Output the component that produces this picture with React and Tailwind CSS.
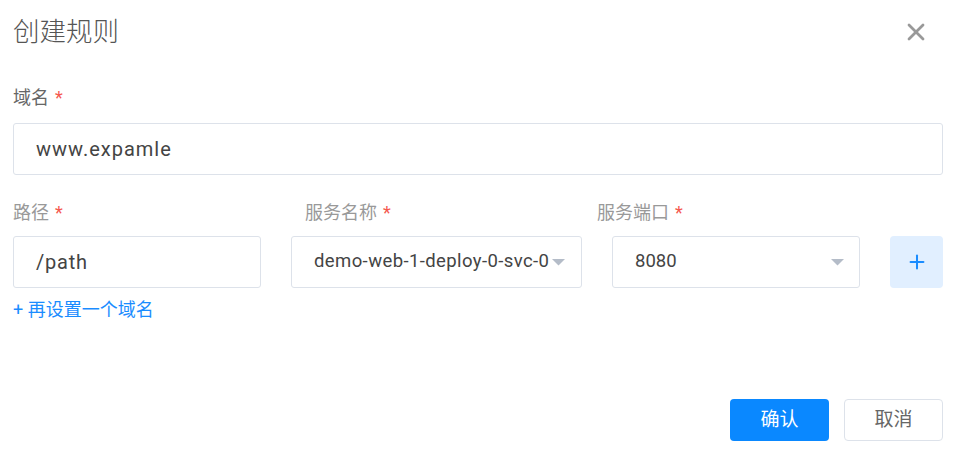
import { X, Plus } from 'lucide-react'

const FONT = 'font-[Roboto,"Noto_Sans_CJK_SC",sans-serif]'

function Label({ text, className = '' }) {
  return (
    <div className={`text-[18px] leading-[24px] ${className}`}>
      {text}
      <span className="ml-[6px] text-[#f5584f]">*</span>
    </div>
  )
}

function Caret() {
  return (
    <svg width="13" height="7" viewBox="0 0 13 7" className="shrink-0">
      <path d="M0 0 L13 0 L6.5 6.5 Z" fill="#b4bcc8" />
    </svg>
  )
}

function Select({ value, className = '', textClass = '' }) {
  return (
    <div className={`h-[52px] flex items-center pl-[22px] pr-[15px] border border-[#dde2ea] rounded-[3px] bg-white ${className}`}>
      <span className={`flex-1 min-w-0 overflow-hidden whitespace-nowrap text-[18.5px] text-[#444] ${textClass}`}>{value}</span>
      <Caret />
    </div>
  )
}

export default function App() {
  return (
    <div className={`w-[968px] h-[456px] bg-white pl-[13px] pr-[25px] ${FONT}`}>
      {/* Header */}
      <div className="mt-[14px] h-[36px] flex items-center justify-between">
        <h1 className="text-[26.5px] leading-[36px] text-[#555] font-light">创建规则</h1>
        <button className="mr-[13px] text-[#999]">
          <X size={28} strokeWidth={2.4} />
        </button>
      </div>

      {/* Domain */}
      <Label text="域名" className="mt-[36px] text-[#666]" />
      <div className="mt-[13px] h-[52px] flex items-center px-[22px] border border-[#dde2ea] rounded-[3px] text-[20px] text-[#444] tracking-[1px]">
        www.expamle
      </div>

      {/* Rule row */}
      <div className="mt-[26px] grid grid-cols-[292px_292px_292px] text-[#999]">
        <Label text="路径" />
        <Label text="服务名称" />
        <Label text="服务端口" />
      </div>
      <div className="mt-[11px] flex gap-[30px]">
        <div className="w-[248px] h-[52px] flex items-center px-[22px] border border-[#dde2ea] rounded-[3px] text-[20px] text-[#444] tracking-[0.8px]">
          /path
        </div>
        <Select value="demo-web-1-deploy-0-svc-0" className="w-[291px] pr-[16px]" textClass="tracking-[0.4px]" />
        <Select value="8080" className="w-[248px]" />
        <button className="w-[53px] h-[52px] flex items-center justify-center rounded-[4px] bg-[#e1efff] text-[#1a8cff]">
          <Plus size={22} strokeWidth={2.2} />
        </button>
      </div>

      <div className="mt-[10px] h-[24px] text-[18px] leading-[24px] text-[#1a8cff]">
        + 再设置一个域名
      </div>

      {/* Footer */}
      <div className="mt-[77px] flex justify-end gap-[15px]">
        <button className="w-[99px] h-[42px] rounded-[4px] bg-[#0a88ff] text-white text-[19px]">确认</button>
        <button className="w-[99px] h-[42px] rounded-[4px] border border-[#dde2ea] bg-white text-[#666] text-[19px]">取消</button>
      </div>
    </div>
  )
}
